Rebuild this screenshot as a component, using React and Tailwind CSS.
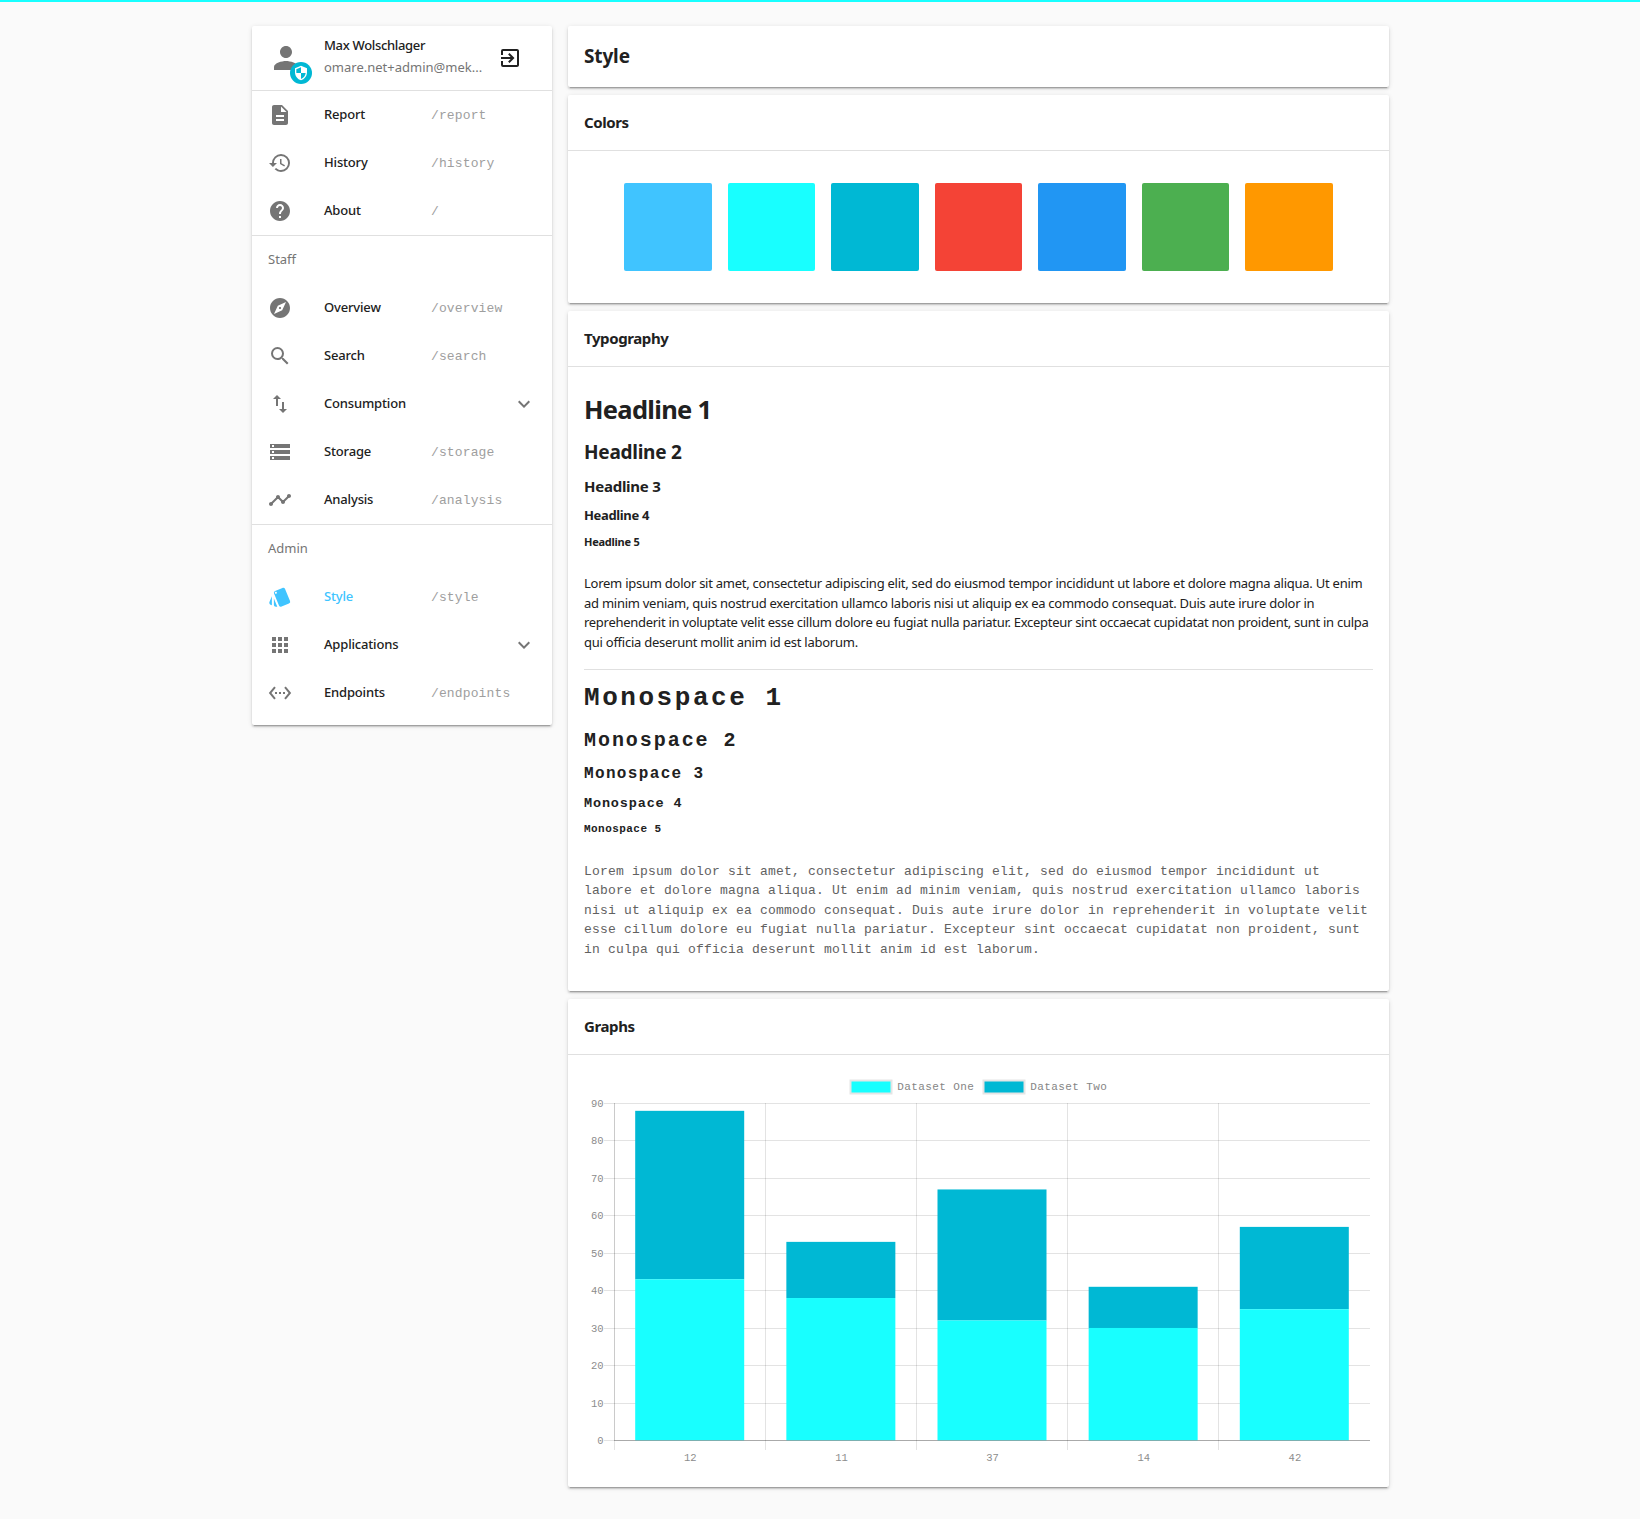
import React from 'react';
import {
  MdPerson, MdSecurity, MdExitToApp, MdDescription, MdHistory, MdHelp, MdExplore, MdSearch,
  MdImportExport, MdStorage, MdTimeline, MdStyle, MdApps, MdSettingsEthernet, MdExpandMore,
} from 'react-icons/md';

const MONO = "font-['Liberation_Mono',monospace]";
const CARD =
  'rounded-[2px] bg-white shadow-[0_3px_1px_-2px_rgba(0,0,0,0.2),0_2px_2px_0_rgba(0,0,0,0.14),0_1px_5px_0_rgba(0,0,0,0.12)]';

const GENERAL = [
  { icon: MdDescription, label: 'Report', path: '/report' },
  { icon: MdHistory, label: 'History', path: '/history' },
  { icon: MdHelp, label: 'About', path: '/' },
];

const STAFF = [
  { icon: MdExplore, label: 'Overview', path: '/overview' },
  { icon: MdSearch, label: 'Search', path: '/search' },
  { icon: MdImportExport, label: 'Consumption' },
  { icon: MdStorage, label: 'Storage', path: '/storage' },
  { icon: MdTimeline, label: 'Analysis', path: '/analysis' },
];

const ADMIN = [
  { icon: MdStyle, label: 'Style', path: '/style', active: true },
  { icon: MdApps, label: 'Applications' },
  { icon: MdSettingsEthernet, label: 'Endpoints', path: '/endpoints' },
];

const SWATCHES = [
  'bg-[#40c4ff]', 'bg-[#18ffff]', 'bg-[#00b8d4]', 'bg-[#f44336]', 'bg-[#2196f3]', 'bg-[#4caf50]', 'bg-[#ff9800]',
];

const HEADLINES = [
  { text: 'Headline 1', cls: 'h-[51px] leading-[53px] text-[25.5px] tracking-[-0.7px]' },
  { text: 'Headline 2', cls: 'h-[35px] leading-[37px] text-[19px] tracking-[-0.25px]' },
  { text: 'Headline 3', cls: 'h-[34px] leading-[34px] text-[15px] tracking-[-0.25px]' },
  { text: 'Headline 4', cls: 'h-[24px] leading-[24px] text-[13px] tracking-[-0.35px]' },
  { text: 'Headline 5', cls: 'h-[29px] leading-[29px] text-[11px] tracking-[-0.25px]' },
];

const MONO_HEADLINES = [
  { text: 'Monospace 1', cls: 'h-[56px] leading-[56px] text-[26px] tracking-[2.55px]' },
  { text: 'Monospace 2', cls: 'h-[30px] leading-[30px] text-[20px] tracking-[1.95px]' },
  { text: 'Monospace 3', cls: 'h-[36px] leading-[36px] text-[16px] tracking-[1.35px]' },
  { text: 'Monospace 4', cls: 'h-[24px] leading-[24px] text-[13.5px] tracking-[0.85px]' },
  { text: 'Monospace 5', cls: 'h-[26px] leading-[26px] text-[11px] tracking-[0.45px]' },
];

const SANS_LINES = [
  { text: 'Lorem ipsum dolor sit amet, consectetur adipiscing elit, sed do eiusmod tempor incididunt ut labore et dolore magna aliqua. Ut enim', cls: 'tracking-[-0.25px]' },
  { text: 'ad minim veniam, quis nostrud exercitation ullamco laboris nisi ut aliquip ex ea commodo consequat. Duis aute irure dolor in', cls: 'tracking-[-0.26px]' },
  { text: 'reprehenderit in voluptate velit esse cillum dolore eu fugiat nulla pariatur. Excepteur sint occaecat cupidatat non proident, sunt in culpa', cls: 'tracking-[-0.285px]' },
  { text: 'qui officia deserunt mollit anim id est laborum.', cls: 'tracking-[-0.25px]' },
];

const MONO_LINES = [
  'Lorem ipsum dolor sit amet, consectetur adipiscing elit, sed do eiusmod tempor incididunt ut',
  'labore et dolore magna aliqua. Ut enim ad minim veniam, quis nostrud exercitation ullamco laboris',
  'nisi ut aliquip ex ea commodo consequat. Duis aute irure dolor in reprehenderit in voluptate velit',
  'esse cillum dolore eu fugiat nulla pariatur. Excepteur sint occaecat cupidatat non proident, sunt',
  'in culpa qui officia deserunt mollit anim id est laborum.',
];

function NavRow({ icon: Icon, label, path, active }) {
  return (
    <a className="flex h-12 items-center px-4">
      <span className="flex w-14 shrink-0 items-center">
        <Icon size={24} className={active ? 'text-[#40c4ff]' : 'text-[#757575]'} />
      </span>
      <span
        className={`w-[107px] shrink-0 text-[13px] font-medium tracking-[-0.17px] ${active ? 'text-[#40c4ff]' : 'text-[#212121]'}`}
      >
        {label}
      </span>
      {path ? (
        <span className={`${MONO} pt-0.5 text-[13px] tracking-[0.13px] text-[#9e9e9e]`}>{path}</span>
      ) : (
        <MdExpandMore size={24} className="ml-auto text-[#757575]" />
      )}
    </a>
  );
}

function Subheader({ children }) {
  return (
    <div className="box-content h-12 border-t border-[#e0e0e0] px-4 text-[13px] leading-[46px] text-[#757575]">
      {children}
    </div>
  );
}

function Sidebar() {
  return (
    <aside className={`${CARD} w-[300px] shrink-0 pb-2`}>
      <div className="flex h-[65px] items-center border-b border-[#e0e0e0] pl-4">
        <div className="relative size-9">
          <MdPerson size={36} className="text-[#757575]" />
          <span className="absolute left-[22px] top-[22px] flex size-[22px] items-center justify-center rounded-full bg-[#00b8d4]">
            <MdSecurity size={16} className="text-white" />
          </span>
        </div>
        <div className="ml-5 w-[171px] whitespace-nowrap pb-1 text-[13px] leading-[22px]">
          <div className="font-medium tracking-[-0.33px] text-[#212121]">Max Wolschlager</div>
          <div className="text-[#757575]">omare.net+admin@mek...</div>
        </div>
        <MdExitToApp size={24} className="ml-[3px] text-[#212121]" />
      </div>
      <nav>
        {GENERAL.map((item) => <NavRow key={item.label} {...item} />)}
        <Subheader>Staff</Subheader>
        {STAFF.map((item) => <NavRow key={item.label} {...item} />)}
        <Subheader>Admin</Subheader>
        {ADMIN.map((item) => <NavRow key={item.label} {...item} />)}
      </nav>
    </aside>
  );
}

function Section({ title, className, children }) {
  return (
    <section className={CARD}>
      <h2 className="h-14 border-b border-[#e0e0e0] px-4 text-[15px] font-bold leading-[54px] tracking-[-0.4px]">
        {title}
      </h2>
      <div className={className}>{children}</div>
    </section>
  );
}

const BARS = [
  { label: '12', one: 43, total: 88 },
  { label: '11', one: 38, total: 53 },
  { label: '37', one: 32, total: 67 },
  { label: '14', one: 30, total: 41 },
  { label: '42', one: 35, total: 57 },
];
const GRID_Y = [385, 348, 310, 273, 235, 198, 160, 123, 85, 48];
const valueY = (v) => 385.3 - v * 3.744;

function Chart() {
  return (
    <svg width="821" height="432" viewBox="0 0 821 432" className={`block ${MONO}`}>
      {GRID_Y.map((y) => (
        <rect key={y} x="36" y={y} width="766" height="1" fill="#000" fillOpacity="0.11" />
      ))}
      {[0, 1, 2, 3, 4].map((i) => (
        <rect key={i} x={46 + Math.round(i * 151.1)} y="48" width="1" height="347" fill="#000" fillOpacity="0.11" />
      ))}
      <rect x="46" y="48" width="1" height="337" fill="#000" fillOpacity="0.11" />
      {BARS.map((b, i) => (
        <g key={b.label}>
          <rect x={67.2 + i * 151.15} y={valueY(b.total)} width="109" height={(b.total - b.one) * 3.744} fill="#00b8d4" />
          <rect x={67.2 + i * 151.15} y={valueY(b.one)} width="109" height={b.one * 3.744} fill="#18ffff" />
        </g>
      ))}
      <rect x="46" y="385" width="756" height="1" fill="#000" fillOpacity="0.25" />
      {GRID_Y.map((y, i) => (
        <text key={y} x="35.5" y={y + 3.6} textAnchor="end" fontSize="10.5" fill="#8c8c8c">{i * 10}</text>
      ))}
      {BARS.map((b, i) => (
        <text key={b.label} x={122.3 + i * 151.15} y="406.3" textAnchor="middle" fontSize="10.5" fill="#8c8c8c">{b.label}</text>
      ))}
      <rect x="282.5" y="25.5" width="41" height="13" fill="#18ffff" />
      <rect x="282.5" y="25.5" width="41" height="13" fill="none" stroke="#e5e5e5" strokeWidth="2" />
      <text x="329.3" y="35" fontSize="11" letterSpacing="0.4" fill="#858585">Dataset One</text>
      <rect x="415.5" y="25.5" width="41" height="13" fill="#00b8d4" />
      <rect x="415.5" y="25.5" width="41" height="13" fill="none" stroke="#e5e5e5" strokeWidth="2" />
      <text x="462.3" y="35" fontSize="11" letterSpacing="0.4" fill="#858585">Dataset Two</text>
    </svg>
  );
}

export default function App() {
  return (
    <div className="min-h-[1519px] border-t-2 border-[#18ffff] bg-[#fafafa] font-['Noto_Sans',sans-serif] text-[#212121]">
      <div className="flex items-start gap-4 pl-[252px] pt-6">
        <Sidebar />
        <main className="flex w-[821px] shrink-0 flex-col gap-2">
          <h1 className={`${CARD} h-[61px] px-4 text-[19px] font-bold leading-[61px] tracking-[-0.15px]`}>Style</h1>

          <Section title="Colors" className="grid h-[152px] grid-cols-7 items-start gap-4 px-14 pt-8">
            {SWATCHES.map((c) => <div key={c} className={`h-[88px] rounded-[2px] ${c}`} />)}
          </Section>

          <Section title="Typography" className="h-[624px] px-4 pt-4">
            {HEADLINES.map((h) => (
              <div key={h.text} className={`font-bold ${h.cls}`}>{h.text}</div>
            ))}
            <p className="mt-[18px] whitespace-nowrap text-[13px] leading-[19.6px]">
              {SANS_LINES.map((l) => <span key={l.text} className={`block ${l.cls}`}>{l.text}</span>)}
            </p>
            <div className="mt-[16.6px] h-px bg-[#e0e0e0]" />
            {MONO_HEADLINES.map((h) => (
              <div key={h.text} className={`${MONO} font-bold ${h.cls}`}>{h.text}</div>
            ))}
            <p className={`${MONO} mt-[19.6px] whitespace-nowrap text-[13px] leading-[19.6px] tracking-[0.2px] text-[#616161]`}>
              {MONO_LINES.map((l) => <span key={l} className="block">{l}</span>)}
            </p>
          </Section>

          <Section title="Graphs">
            <Chart />
          </Section>
        </main>
      </div>
    </div>
  );
}
